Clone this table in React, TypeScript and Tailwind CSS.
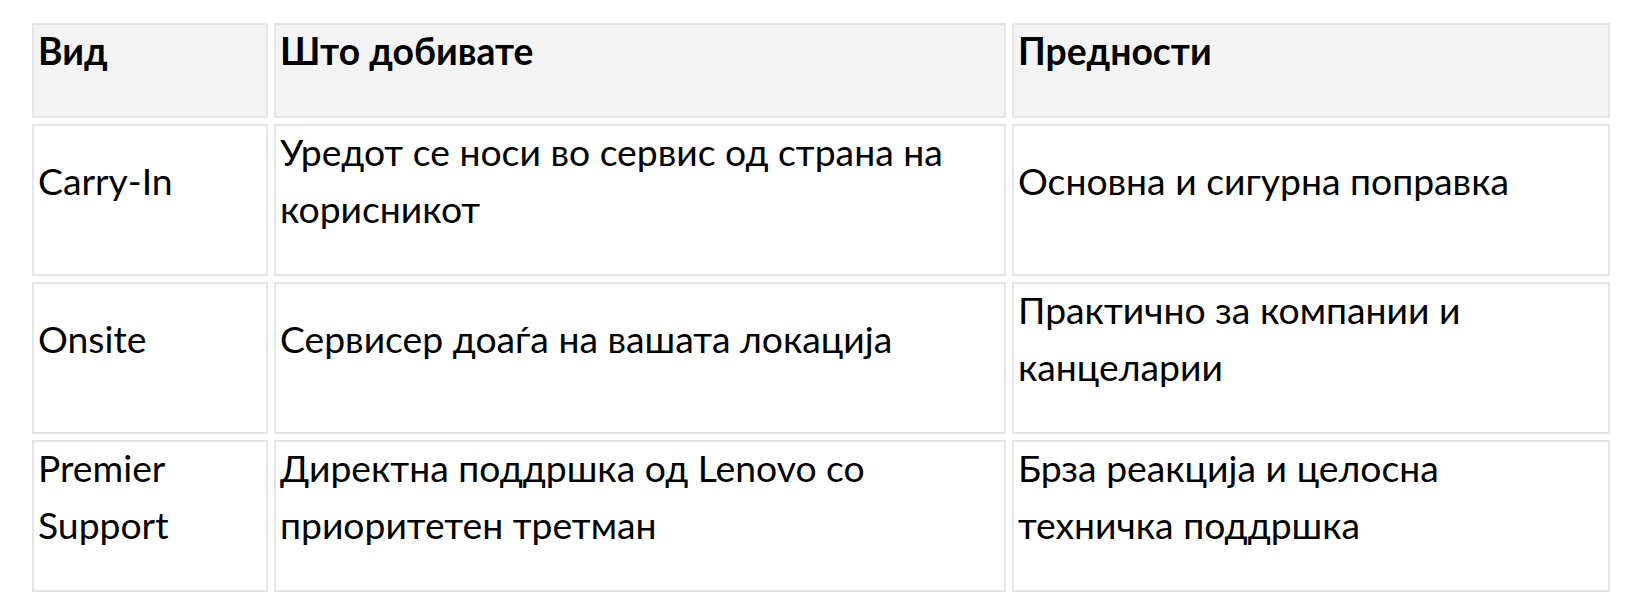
const rows = [
  {
    kind: "Carry-In",
    what: "Уредот се носи во сервис од страна на корисникот",
    pros: "Основна и сигурна поправка",
  },
  {
    kind: "Onsite",
    what: "Сервисер доаѓа на вашата локација",
    pros: "Практично за компании и канцеларии",
  },
  {
    kind: "Premier Support",
    what: "Директна поддршка од Lenovo со приоритетен третман",
    pros: "Брза реакција и целосна техничка поддршка",
  },
];

const cell =
  "border-2 border-[#e5e5e5] pl-[4px] pr-[24px] pt-0 pb-[34px] text-left align-middle";

export default function App() {
  return (
    <div className="min-h-screen bg-white pl-[26px] pt-[17px] font-['Lato','Noto_Sans',sans-serif] text-[37.3px] leading-[57px] text-black">
      <table className="table-fixed border-separate border-spacing-[6px]">
        <colgroup>
          <col className="w-[236px]" />
          <col className="w-[732px]" />
          <col className="w-[598px]" />
        </colgroup>
        <thead>
          <tr className="bg-[#f3f3f3]">
            <th className={cell + " font-bold"}>
              <div className="-translate-y-[3px]">Вид</div>
            </th>
            <th className={cell + " font-bold"}>
              <div className="-translate-y-[3px]">Што добивате</div>
            </th>
            <th className={cell + " font-bold"}>
              <div className="-translate-y-[3px]">Предности</div>
            </th>
          </tr>
        </thead>
        <tbody>
          {rows.map((row) => (
            <tr key={row.kind}>
              <td className={cell}>
                <div className="-translate-y-[3px]">{row.kind}</div>
              </td>
              <td className={cell}>
                <div className="-translate-y-[3px]">{row.what}</div>
              </td>
              <td className={cell}>
                <div className="-translate-y-[3px]">{row.pros}</div>
              </td>
            </tr>
          ))}
        </tbody>
      </table>
    </div>
  );
}
